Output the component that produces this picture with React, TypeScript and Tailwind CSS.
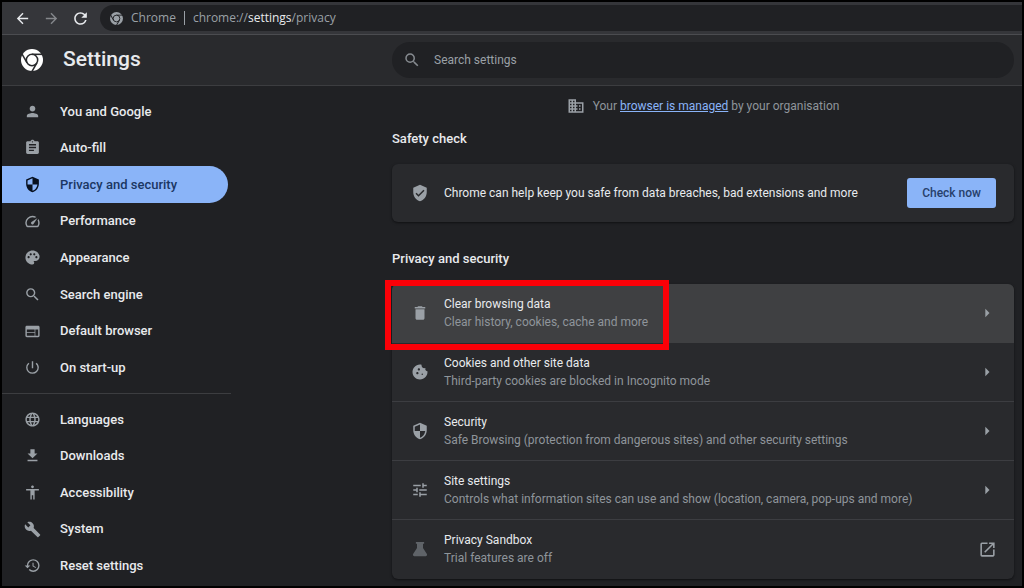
import type { IconType } from 'react-icons';
import {
  MdAccessibility,
  MdArrowBack,
  MdArrowForward,
  MdArrowRight,
  MdAssignment,
  MdBuild,
  MdCookie,
  MdDelete,
  MdDomain,
  MdFileDownload,
  MdHistory,
  MdLanguage,
  MdOpenInNew,
  MdPalette,
  MdPerson,
  MdPowerSettingsNew,
  MdRefresh,
  MdSearch,
  MdSecurity,
  MdSpeed,
  MdTune,
  MdVerifiedUser,
  MdWeb,
} from 'react-icons/md';

type NavItem = {
  label: string;
  icon: IconType;
  active?: boolean;
};

type SettingRow = {
  title: string;
  description: string;
  icon: IconType | typeof FlaskIcon;
  highlighted?: boolean;
  external?: boolean;
};

const MAIN_NAV: NavItem[] = [
  { label: 'You and Google', icon: MdPerson },
  { label: 'Auto-fill', icon: MdAssignment },
  { label: 'Privacy and security', icon: MdSecurity, active: true },
  { label: 'Performance', icon: MdSpeed },
  { label: 'Appearance', icon: MdPalette },
  { label: 'Search engine', icon: MdSearch },
  { label: 'Default browser', icon: MdWeb },
  { label: 'On start-up', icon: MdPowerSettingsNew },
];

const ADVANCED_NAV: NavItem[] = [
  { label: 'Languages', icon: MdLanguage },
  { label: 'Downloads', icon: MdFileDownload },
  { label: 'Accessibility', icon: MdAccessibility },
  { label: 'System', icon: MdBuild },
  { label: 'Reset settings', icon: MdHistory },
];

const ROWS: SettingRow[] = [
  {
    title: 'Clear browsing data',
    description: 'Clear history, cookies, cache and more',
    icon: MdDelete,
    highlighted: true,
  },
  {
    title: 'Cookies and other site data',
    description: 'Third-party cookies are blocked in Incognito mode',
    icon: MdCookie,
  },
  {
    title: 'Security',
    description: 'Safe Browsing (protection from dangerous sites) and other security settings',
    icon: MdSecurity,
  },
  {
    title: 'Site settings',
    description: 'Controls what information sites can use and show (location, camera, pop-ups and more)',
    icon: MdTune,
  },
  {
    title: 'Privacy Sandbox',
    description: 'Trial features are off',
    icon: FlaskIcon,
    external: true,
  },
];

function FlaskIcon({ className }: { className?: string }) {
  return (
    <svg viewBox="0 0 24 24" fill="currentColor" className={className} aria-hidden="true">
      <path d="M6.5 2.5h11v2.6H16v5.4l5.2 8.3c.8 1.300-.1 2.700-1.500 2.700H4.300c-1.400 0-2.300-1.400-1.500-2.700L8 10.500V5.100H6.500z" />
    </svg>
  );
}

function ChromeLogo({ className, gap }: { className: string; gap: string }) {
  return (
    <svg viewBox="0 0 24 24" className={className} aria-hidden="true">
      <circle cx="12" cy="12" r="12" fill="currentColor" />
      <g stroke={gap} strokeWidth="1.7" fill="none">
        <circle cx="12" cy="12" r="6.2" />
        <path d="M12 5.8H24" />
        <path d="M12 5.8H24" transform="rotate(120 12 12)" />
        <path d="M12 5.8H24" transform="rotate(240 12 12)" />
      </g>
    </svg>
  );
}

function NavLink({ item }: { item: NavItem }) {
  const Icon = item.icon;

  return (
    <a
      href="#"
      className={
        item.active
          ? 'flex items-center gap-[19px] rounded-r-full bg-[#8ab4f8] pl-[22px] text-[#1b3763]'
          : 'flex items-center gap-[19px] pl-[22px] text-[#e8eaed]'
      }
    >
      <Icon className={item.active ? 'size-[17px] text-[#07101f]' : 'size-[17px] text-[#9aa0a6]'} />
      <span>{item.label}</span>
    </a>
  );
}

function Row({ row }: { row: SettingRow }) {
  const Icon = row.icon;

  return (
    <li
      className={
        row.highlighted
          ? 'relative rounded-t-md bg-[#3f4042]'
          : 'border-[#3c3d41] not-last:border-b'
      }
    >
      <a href="#" className="flex min-h-[58px] items-center py-[11px] pr-[17px] pl-[19px]">
        <Icon className={row.external ? 'size-[18px] text-[#5f6368]' : 'size-[18px] text-[#9aa0a6]'} />
        <span className="ml-[15px] flex-1 text-xs leading-[18px]">
          <span className="block text-[#e8eaed]">{row.title}</span>
          <span className="block text-[#8f959b]">{row.description}</span>
        </span>
        {row.external ? (
          <MdOpenInNew className="size-[19px] text-[#9aa0a6]" />
        ) : (
          <MdArrowRight className="size-5 text-[#9aa0a6]" />
        )}
      </a>
      {row.highlighted ? (
        <span className="pointer-events-none absolute -top-1 -left-[7px] h-[70px] w-[284px] border-[6px] border-[#fb0007]" />
      ) : null}
    </li>
  );
}

export default function App() {
  return (
    <div className="flex min-h-screen flex-col border-2 border-black bg-[#202124] font-[Roboto,sans-serif] text-[#e8eaed]">
      <div className="flex h-[33px] items-center border-b border-[#4b4c50] bg-[#35363a] pl-3">
        <button type="button" aria-label="Back">
          <MdArrowBack className="size-[17px] text-[#e8eaed]" />
        </button>
        <button type="button" aria-label="Forward" className="ml-3">
          <MdArrowForward className="size-[17px] text-[#85878b]" />
        </button>
        <button type="button" aria-label="Reload" className="ml-[11px]">
          <MdRefresh className="size-[19px] text-[#e8eaed]" />
        </button>
        <div className="ml-[10px] flex h-[26px] flex-1 items-center rounded-l-full bg-[#202124] pl-[10px] font-['Open_Sans',sans-serif] text-xs text-[#9aa0a6]">
          <ChromeLogo className="size-[13px]" gap="#202124" />
          <span className="ml-2">Chrome</span>
          <span className="mx-2 h-[14px] w-px bg-[#9aa0a6]" />
          <span>
            chrome://<span className="text-[#e8eaed]">settings</span>/privacy
          </span>
        </div>
      </div>

      <header className="flex h-[51px] items-center border-b border-[#3c3d40] bg-[#292a2d] pr-2">
        <div className="flex w-[390px] shrink-0 items-center pl-[19px]">
          <ChromeLogo className="size-[22px] text-white" gap="#292a2d" />
          <h1 className="ml-5 text-[21px] font-medium">Settings</h1>
        </div>
        <label className="flex h-9 flex-1 items-center rounded-full bg-[#202124] pl-[11px]">
          <MdSearch className="size-[18px] text-[#868b90]" />
          <input
            type="search"
            aria-label="Search settings"
            placeholder="Search settings"
            className="ml-[13px] flex-1 bg-transparent text-xs outline-none placeholder:text-[#9aa0a6]"
          />
        </label>
      </header>

      <div className="flex flex-1 pr-2">
        <div className="w-[390px] shrink-0">
          <nav className="w-[229px] pt-[7px] text-[13px] font-medium">
            <div className="grid min-h-[293px] auto-rows-fr pr-[3px]">
              {MAIN_NAV.map((item) => (
                <NavLink key={item.label} item={item} />
              ))}
            </div>
            <hr className="my-[7px] border-[#3c3d40]" />
            <div className="grid min-h-[183px] auto-rows-fr pr-[3px]">
              {ADVANCED_NAV.map((item) => (
                <NavLink key={item.label} item={item} />
              ))}
            </div>
          </nav>
        </div>

        <main className="min-w-0 flex-1">
          <p className="flex h-10 items-center justify-center gap-2 text-xs text-[#8f959b]">
            <MdDomain className="size-[18px] text-[#9aa0a6]" />
            <span>
              Your{' '}
              <a href="#" className="text-[#8ab4f8] underline">
                browser is managed
              </a>{' '}
              by your organisation
            </span>
          </p>

          <h2 className="mb-3 text-[13px] leading-[26px] font-medium">Safety check</h2>
          <section className="flex min-h-[58px] items-center rounded-md bg-[#292a2d] pr-[18px] pl-[19px] shadow-sm shadow-black/40">
            <MdVerifiedUser className="size-[18px] text-[#9aa0a6]" />
            <p className="ml-[15px] flex-1 text-xs">
              Chrome can help keep you safe from data breaches, bad extensions and more
            </p>
            <button
              type="button"
              className="h-[30px] rounded-[3px] bg-[#8ab4f8] px-[15px] text-xs font-medium text-[#27406b]"
            >
              Check now
            </button>
          </section>

          <h2 className="mt-6 mb-3 text-[13px] leading-[26px] font-medium">Privacy and security</h2>
          <ul className="grid auto-rows-fr rounded-md bg-[#292a2d] shadow-sm shadow-black/40">
            {ROWS.map((row) => (
              <Row key={row.title} row={row} />
            ))}
          </ul>
        </main>
      </div>
    </div>
  );
}
